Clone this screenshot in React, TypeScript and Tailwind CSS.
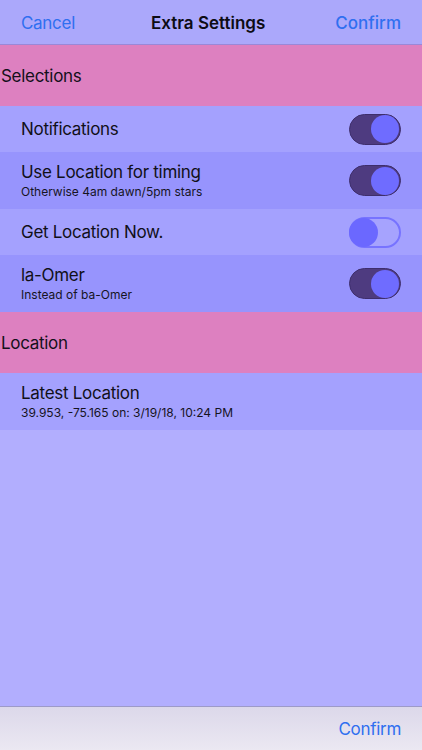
import React from 'react';

const font = { fontFamily: 'Inter, "Liberation Sans", sans-serif' };

interface ToggleProps {
  on: boolean;
}

function Toggle({ on }: ToggleProps) {
  if (on) {
    return (
      <div className="w-[52px] h-[31px] rounded-full bg-[#4e3b80] border border-[#3e2e6c] flex items-center justify-end p-[1px]">
        <div className="w-[28px] h-[28px] rounded-full bg-[#6f6cff]" />
      </div>
    );
  }
  return (
    <div className="w-[52px] h-[31px] rounded-full bg-[#a6a3fe] border-2 border-[#7773ff] flex items-center justify-start">
      <div className="w-[29px] h-[29px] -ml-[2px] rounded-full bg-[#6b68ff]" />
    </div>
  );
}

interface RowProps {
  title: string;
  subtitle?: string;
  toggle?: boolean;
  dark?: boolean;
}

function Row({ title, subtitle, toggle, dark }: RowProps) {
  return (
    <div
      className={`flex items-center justify-between pl-[21px] pr-[21px] ${
        subtitle ? 'h-[57px]' : 'h-[46px]'
      } ${dark ? 'bg-[#9794fd]' : 'bg-[#a4a1fe]'}`}
    >
      <div className="flex flex-col">
        <span className="text-[17px] leading-[21px] tracking-[-0.3px] text-[#111018]">{title}</span>
        {subtitle && <span className="text-[12px] leading-[17px] text-[#16141f]">{subtitle}</span>}
      </div>
      {toggle !== undefined && <Toggle on={toggle} />}
    </div>
  );
}

function SectionHeader({ title }: { title: string }) {
  return (
    <div className="h-[61px] bg-[#dd80c0] flex items-center pl-[1px] pt-[2px]">
      <span className="text-[17px] tracking-[-0.3px] text-[#14101a]">{title}</span>
    </div>
  );
}

export default function App() {
  return (
    <div className="w-[422px] h-[750px] flex flex-col bg-[#b2aefe] overflow-hidden" style={font}>
      <div className="h-[45px] bg-[#aba8fb] border-b border-[#9a88d8] flex items-center justify-between pl-[21px] pr-[21px] pt-[3px] shrink-0">
        <span className="text-[17px] tracking-[-0.3px] text-[#2f6ff0]">Cancel</span>
        <span className="text-[17px] font-semibold text-[#0d0c14] ml-[6px]">Extra Settings</span>
        <span className="text-[17px] font-medium text-[#2f6ff0]">Confirm</span>
      </div>

      <SectionHeader title="Selections" />
      <Row title="Notifications" toggle={true} />
      <Row title="Use Location for timing" subtitle="Otherwise 4am dawn/5pm stars" toggle={true} dark />
      <Row title="Get Location Now." toggle={false} />
      <Row title="la-Omer" subtitle="Instead of ba-Omer" toggle={true} dark />

      <SectionHeader title="Location" />
      <Row title="Latest Location" subtitle="39.953, -75.165 on: 3/19/18, 10:24 PM" />

      <div className="flex-1" />

      <div className="h-[44px] shrink-0 border-t border-[#9d9ac8] bg-gradient-to-b from-[#dcd8ea] to-[#ebe8f2] flex items-center justify-end px-[21px] pt-[2px]">
        <span className="text-[17px] tracking-[-0.3px] text-[#2f6ff0]">Confirm</span>
      </div>
    </div>
  );
}
